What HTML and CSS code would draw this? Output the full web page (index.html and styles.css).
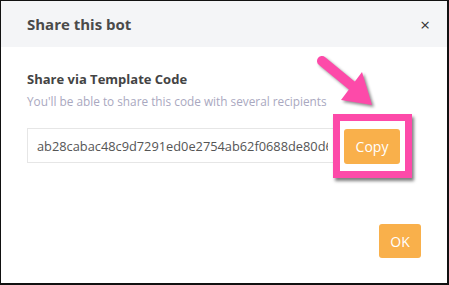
FILE: index.html
```html
<!DOCTYPE html>
<html lang="en">
<head>
    <meta charset="UTF-8">
    <meta name="viewport" content="width=device-width, initial-scale=1.0">
    <title>Share this bot</title>
    <link rel="stylesheet" href="styles.css">
</head>
<body>
    <div class="modal">
        <div class="modal-header">
            <h2>Share this bot</h2>
            <span class="close">&times;</span>
        </div>

        <div class="modal-body">
            <h3>Share via Template Code</h3>
            <p class="hint">You'll be able to share this code with several recipients</p>

            <div class="code-row">
                <input type="text" class="code-input" value="ab28cabac48c9d7291ed0e2754ab62f0688de80d6a41c9e0" readonly>
                <button class="btn">Copy</button>
            </div>
        </div>

        <div class="modal-footer">
            <button class="btn">OK</button>
        </div>

        <!-- annotation drawn over the screenshot -->
        <div class="highlight"></div>
        <svg class="arrow" width="449" height="285" viewBox="0 0 449 285">
            <line x1="322" y1="61" x2="356" y2="89" stroke="#fd4aa9" stroke-width="10" stroke-linecap="round"/>
            <polygon points="372,105 341,100 362,72" fill="#fd4aa9"/>
        </svg>
    </div>
</body>
</html>
```

FILE: styles.css
```css
body {
    font-family: "Open Sans", Arial, sans-serif;
    margin: 0;
    padding: 0;
    background-color: #fff;
}

.modal {
    position: relative;
    width: 449px;
    height: 285px;
    box-sizing: border-box;
    border-style: solid;
    border-color: #111;
    border-width: 1px 2px 2px 1px;
    display: flex;
    flex-direction: column;
    overflow: hidden;
}

.modal-header {
    background-color: #f4f5f7;
    height: 46px;
    display: flex;
    align-items: center;
    justify-content: space-between;
    padding: 0 17px 0 26px;
}

.modal-header h2 {
    margin: 0;
    font-size: 15px;
    font-weight: 700;
    color: #4a4a4a;
}

.close {
    font-size: 17px;
    color: #333;
    line-height: 1;
}

.modal-body {
    padding: 20px 26px 0 26px;
}

.modal-body h3 {
    margin: 0;
    font-size: 13px;
    font-weight: 700;
    color: #444;
    line-height: 24px;
}

.hint {
    margin: 0;
    font-size: 11.8px;
    color: #a9a8c0;
    line-height: 20px;
}

.code-row {
    margin-top: 17px;
    display: flex;
    gap: 6px;
}

.code-input {
    width: 311px;
    height: 35px;
    box-sizing: border-box;
    border: 1px solid #e6e6e6;
    padding: 0 9px;
    font-family: "Open Sans", Arial, sans-serif;
    font-size: 12.8px;
    color: #555;
    outline: none;
}

.btn {
    background-color: #f9b04b;
    color: white;
    border: none;
    border-radius: 3px;
    font-family: "Open Sans", Arial, sans-serif;
    font-size: 14px;
    padding: 0 10px;
    height: 35px;
    cursor: pointer;
}

.code-row .btn {
    width: 56px;
    margin-top: 1px;
}

.modal-footer {
    margin-top: auto;
    display: flex;
    justify-content: flex-end;
    padding: 0 26px 25px 0;
}

.modal-footer .btn {
    width: 42px;
    height: 34px;
    padding: 0;
}

.highlight {
    position: absolute;
    left: 332px;
    top: 113px;
    width: 79px;
    height: 64px;
    box-sizing: border-box;
    border: 7px solid #fd4aa9;
    box-shadow: 2px 3px 3px rgba(0, 0, 0, 0.5);
}

.arrow {
    position: absolute;
    left: -1px;
    top: -1px;
    pointer-events: none;
    filter: drop-shadow(2px 2px 1.5px rgba(0, 0, 0, 0.45));
}
```
